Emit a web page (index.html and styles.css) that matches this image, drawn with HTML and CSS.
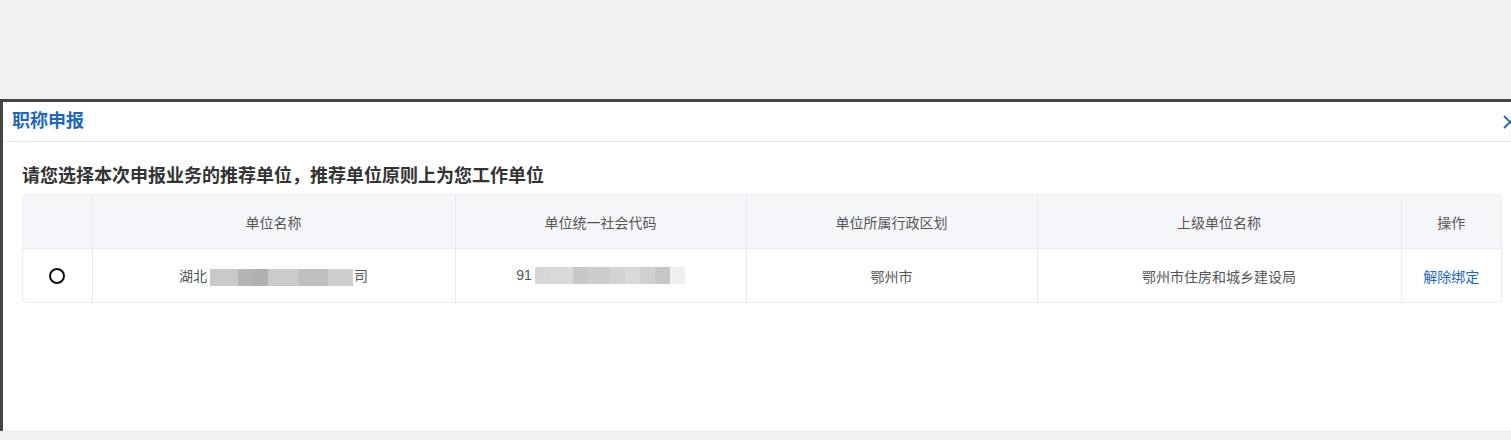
FILE: index.html
```html
<!doctype html>
<html lang="zh-CN">
<head>
    <meta charset="UTF-8">
    <title>职称申报</title>
    <link rel="stylesheet" href="styles.css">
</head>
<body>

<div id="dialog">
    <div class="dialog-head">
        <h3>职称申报</h3>
        <a class="dialog-close" href="javascript:;">
            <svg width="14" height="14" viewBox="0 0 14 14">
                <path d="M1 1L13 13M13 1L1 13" stroke="#1E67BE" stroke-width="1.8" fill="none"/>
            </svg>
        </a>
    </div>
    <div class="dialog-body">
        <p class="tip">请您选择本次申报业务的推荐单位，推荐单位原则上为您工作单位</p>

        <div class="unit-table">
            <table>
                <colgroup>
                    <col class="c-radio">
                    <col class="c-name">
                    <col class="c-code">
                    <col class="c-area">
                    <col class="c-parent">
                    <col class="c-op">
                </colgroup>
                <thead>
                <tr>
                    <th></th>
                    <th>单位名称</th>
                    <th>单位统一社会代码</th>
                    <th>单位所属行政区划</th>
                    <th>上级单位名称</th>
                    <th>操作</th>
                </tr>
                </thead>
                <tbody>
                <tr>
                    <td><span class="radio"></span></td>
                    <td>湖北<span class="blur blur-name"></span>司</td>
                    <td>91<span class="blur blur-code"></span></td>
                    <td>鄂州市</td>
                    <td>鄂州市住房和城乡建设局</td>
                    <td><a href="javascript:;">解除绑定</a></td>
                </tr>
                </tbody>
            </table>
        </div>
    </div>
</div>

</body>
</html>
```

FILE: styles.css
```css
*{
    margin: 0;
    padding: 0;
}
a{
    text-decoration: none;
}
body,html{
    width:100%;
    height:100%;
    overflow: hidden;
}
body{
    background-color: #F0F0F0;
    font-family: "Liberation Sans", "Noto Sans CJK SC", sans-serif;
}

#dialog{
    margin-top: 99px;
    width: 1521px;
    height: 332px;
    box-sizing: border-box;
    border-top: 3px solid #444;
    border-left: 3px solid #444;
    background-color: #fff;
}

.dialog-head{
    height: 39px;
    border-bottom: 1px solid #E8E8E8;
    display: flex;
    align-items: center;
    justify-content: space-between;
    padding: 0 4px 0 9px;
}
.dialog-head h3{
    font-size: 18px;
    color: #1E67BE;
    font-weight: bold;
    line-height: 39px;
}
.dialog-close{
    display: flex;
    margin-top: 1px;
}

.dialog-body{
    padding: 0 19px;
}
.tip{
    font-size: 18px;
    font-weight: bold;
    color: #333;
    line-height: 24px;
    padding: 22px 0 6px;
}

.unit-table{
    border: 1px solid #E8EAF0;
    border-radius: 4px;
    overflow: hidden;
}
.unit-table table{
    width: 100%;
    border-collapse: collapse;
    table-layout: fixed;
}
.c-radio{ width: 69px; }
.c-name{ width: 363px; }
.c-code{ width: 291px; }
.c-area{ width: 291px; }
.c-parent{ width: 364px; }
.c-op{ width: 100px; }

.unit-table th,
.unit-table td{
    height: 53px;
    text-align: center;
    font-size: 14px;
    font-weight: normal;
    color: #555;
    border-left: 1px solid #E8EAF0;
    white-space: nowrap;
}
.unit-table th:first-child,
.unit-table td:first-child{
    border-left: none;
}
.unit-table th{
    background-color: #F5F6FA;
    border-bottom: 1px solid #E8EAF0;
}
.unit-table td a{
    color: #1E67BE;
}

.radio{
    display: inline-block;
    width: 12px;
    height: 12px;
    border: 2px solid #111;
    border-radius: 50%;
    vertical-align: middle;
}

.blur{
    display: inline-block;
    height: 17px;
    vertical-align: middle;
}
.blur-name{
    width: 143px;
    margin: 0 1px 0 3px;
    background: linear-gradient(90deg, #C9C9C9 0 28px, #B5B5B5 28px 43px, #B0B0B0 43px 58px, #CBCBCB 58px 88px, #BFBFBF 88px 118px, #CFCFCF 118px 143px);
}
.blur-code{
    width: 150px;
    margin-left: 3px;
    background: linear-gradient(90deg, #D6D6D6 0 15px, #D9D9D9 15px 38px, #C8C8C8 38px 53px, #CDCDCD 53px 75px, #D3D3D3 75px 90px, #DADADA 90px 105px, #D0D0D0 105px 120px, #C6C6C6 120px 135px, #EFEFEF 135px 150px);
}
```
